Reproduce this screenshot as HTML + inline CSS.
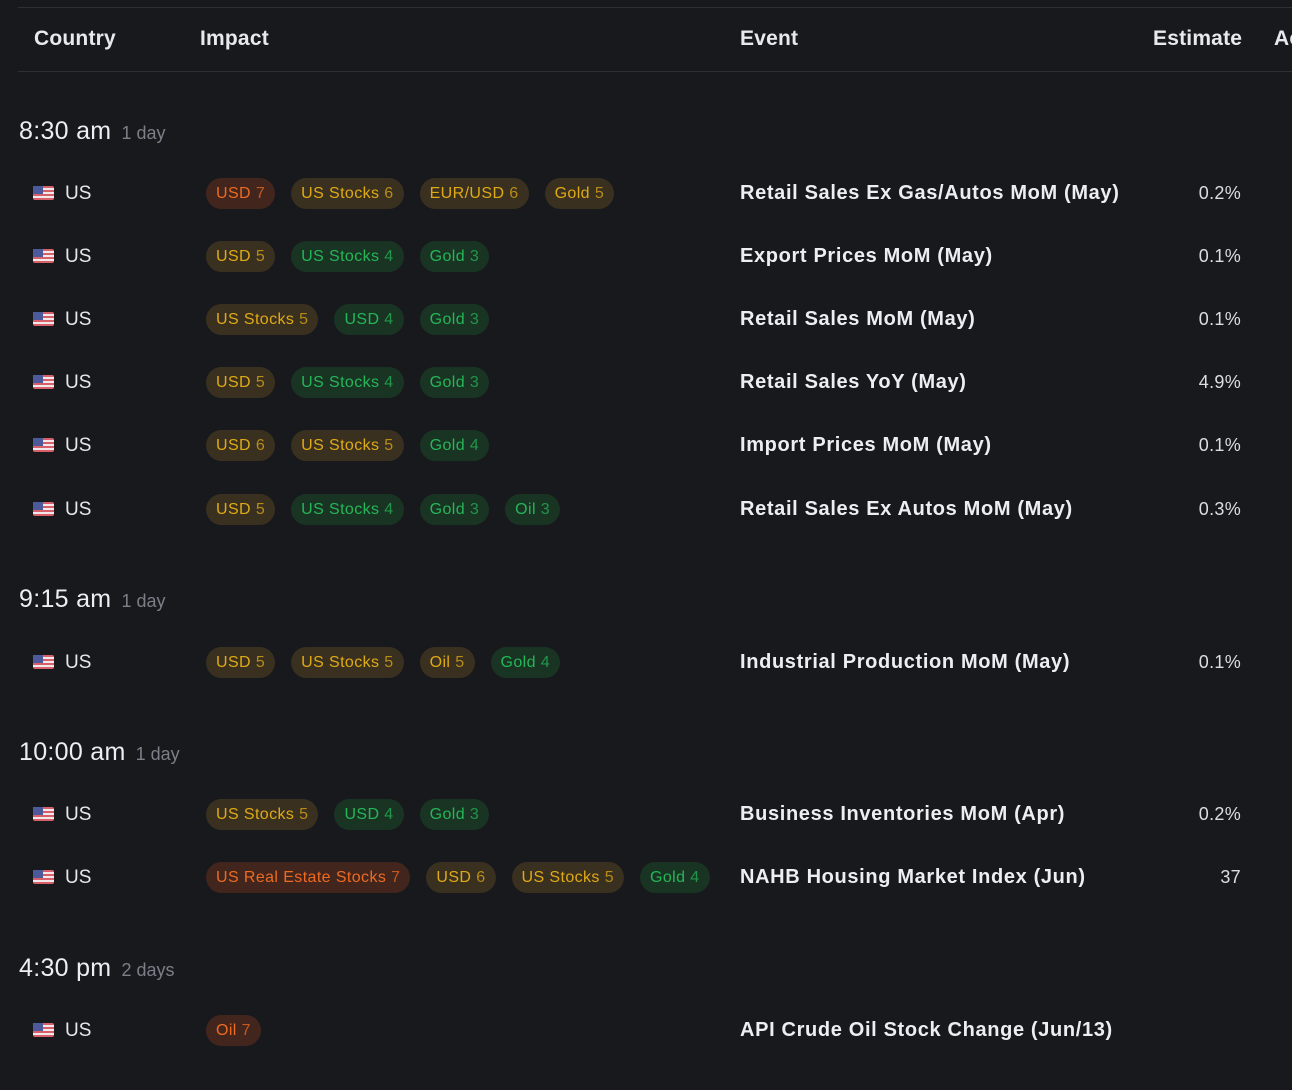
<!DOCTYPE html><html><head><meta charset="utf-8"><style>
body{margin:0;width:1292px;height:1090px;background:#18191d;font-family:"Liberation Sans",sans-serif;color:#e6e7ea;position:relative;overflow:hidden}
.a{position:absolute;white-space:nowrap}
.line{position:absolute;left:18px;right:0;height:1px;background:#2e3036}
.h{font-size:21px;font-weight:bold;top:27px;color:#e8e9ec;letter-spacing:0.2px}
.t{left:19px;font-size:25px;color:#eceef1;letter-spacing:0.3px}
.t span{font-size:18px;color:#7c7f88;margin-left:10px;letter-spacing:0}
.row{position:absolute;left:0;width:1292px;height:32px}
.flag{position:absolute;left:33px;top:9px;width:21px;height:14px;border-radius:2px;background:repeating-linear-gradient(#d6606a 0 2px,#f2e8ea 2px 4px)}
.flag:after{content:"";position:absolute;left:0;top:0;width:10px;height:8px;background:#4c5a9c}
.cty{position:absolute;left:65px;top:6px;font-size:19px}
.pills{position:absolute;left:206px;top:1px;display:flex;gap:16px}
.p{height:31px;line-height:31px;border-radius:16px;padding:0 10px;font-size:16px;letter-spacing:0.4px}
.p i{font-style:normal;opacity:.75}
.o{background:#42261e;color:#ee6a20}
.y{background:#3a3020;color:#e0aa14}
.g{background:#1a3424;color:#24b657}
.ev{position:absolute;left:740px;top:5px;font-size:20px;font-weight:bold;color:#eceef1;letter-spacing:0.65px}
.es{position:absolute;right:51px;top:6px;font-size:18px;color:#dcdde0;letter-spacing:0.3px}
</style></head><body>
<div class="line" style="top:7px"></div>
<div class="line" style="top:71px"></div>
<div class="a h" style="left:34px">Country</div>
<div class="a h" style="left:200px">Impact</div>
<div class="a h" style="left:740px">Event</div>
<div class="a h" style="left:1153px">Estimate</div>
<div class="a h" style="left:1274px">Ac</div>

<div class="a t" style="top:117px">8:30 am<span>1 day</span></div>
<div class="row" style="top:177px"><div class="flag"></div><div class="cty">US</div><div class="pills"><div class="p o">USD <i>7</i></div><div class="p y">US Stocks <i>6</i></div><div class="p y">EUR/USD <i>6</i></div><div class="p y">Gold <i>5</i></div></div><div class="ev">Retail Sales Ex Gas/Autos MoM (May)</div><div class="es">0.2%</div></div>
<div class="row" style="top:240px"><div class="flag"></div><div class="cty">US</div><div class="pills"><div class="p y">USD <i>5</i></div><div class="p g">US Stocks <i>4</i></div><div class="p g">Gold <i>3</i></div></div><div class="ev">Export Prices MoM (May)</div><div class="es">0.1%</div></div>
<div class="row" style="top:303px"><div class="flag"></div><div class="cty">US</div><div class="pills"><div class="p y">US Stocks <i>5</i></div><div class="p g">USD <i>4</i></div><div class="p g">Gold <i>3</i></div></div><div class="ev">Retail Sales MoM (May)</div><div class="es">0.1%</div></div>
<div class="row" style="top:366px"><div class="flag"></div><div class="cty">US</div><div class="pills"><div class="p y">USD <i>5</i></div><div class="p g">US Stocks <i>4</i></div><div class="p g">Gold <i>3</i></div></div><div class="ev">Retail Sales YoY (May)</div><div class="es">4.9%</div></div>
<div class="row" style="top:429px"><div class="flag"></div><div class="cty">US</div><div class="pills"><div class="p y">USD <i>6</i></div><div class="p y">US Stocks <i>5</i></div><div class="p g">Gold <i>4</i></div></div><div class="ev">Import Prices MoM (May)</div><div class="es">0.1%</div></div>
<div class="row" style="top:493px"><div class="flag"></div><div class="cty">US</div><div class="pills"><div class="p y">USD <i>5</i></div><div class="p g">US Stocks <i>4</i></div><div class="p g">Gold <i>3</i></div><div class="p g">Oil <i>3</i></div></div><div class="ev">Retail Sales Ex Autos MoM (May)</div><div class="es">0.3%</div></div>

<div class="a t" style="top:585px">9:15 am<span>1 day</span></div>
<div class="row" style="top:646px"><div class="flag"></div><div class="cty">US</div><div class="pills"><div class="p y">USD <i>5</i></div><div class="p y">US Stocks <i>5</i></div><div class="p y">Oil <i>5</i></div><div class="p g">Gold <i>4</i></div></div><div class="ev">Industrial Production MoM (May)</div><div class="es">0.1%</div></div>

<div class="a t" style="top:738px">10:00 am<span>1 day</span></div>
<div class="row" style="top:798px"><div class="flag"></div><div class="cty">US</div><div class="pills"><div class="p y">US Stocks <i>5</i></div><div class="p g">USD <i>4</i></div><div class="p g">Gold <i>3</i></div></div><div class="ev">Business Inventories MoM (Apr)</div><div class="es">0.2%</div></div>
<div class="row" style="top:861px"><div class="flag"></div><div class="cty">US</div><div class="pills"><div class="p o">US Real Estate Stocks <i>7</i></div><div class="p y">USD <i>6</i></div><div class="p y">US Stocks <i>5</i></div><div class="p g">Gold <i>4</i></div></div><div class="ev">NAHB Housing Market Index (Jun)</div><div class="es">37</div></div>

<div class="a t" style="top:954px">4:30 pm<span>2 days</span></div>
<div class="row" style="top:1014px"><div class="flag"></div><div class="cty">US</div><div class="pills"><div class="p o">Oil <i>7</i></div></div><div class="ev">API Crude Oil Stock Change (Jun/13)</div></div>
</body></html>
